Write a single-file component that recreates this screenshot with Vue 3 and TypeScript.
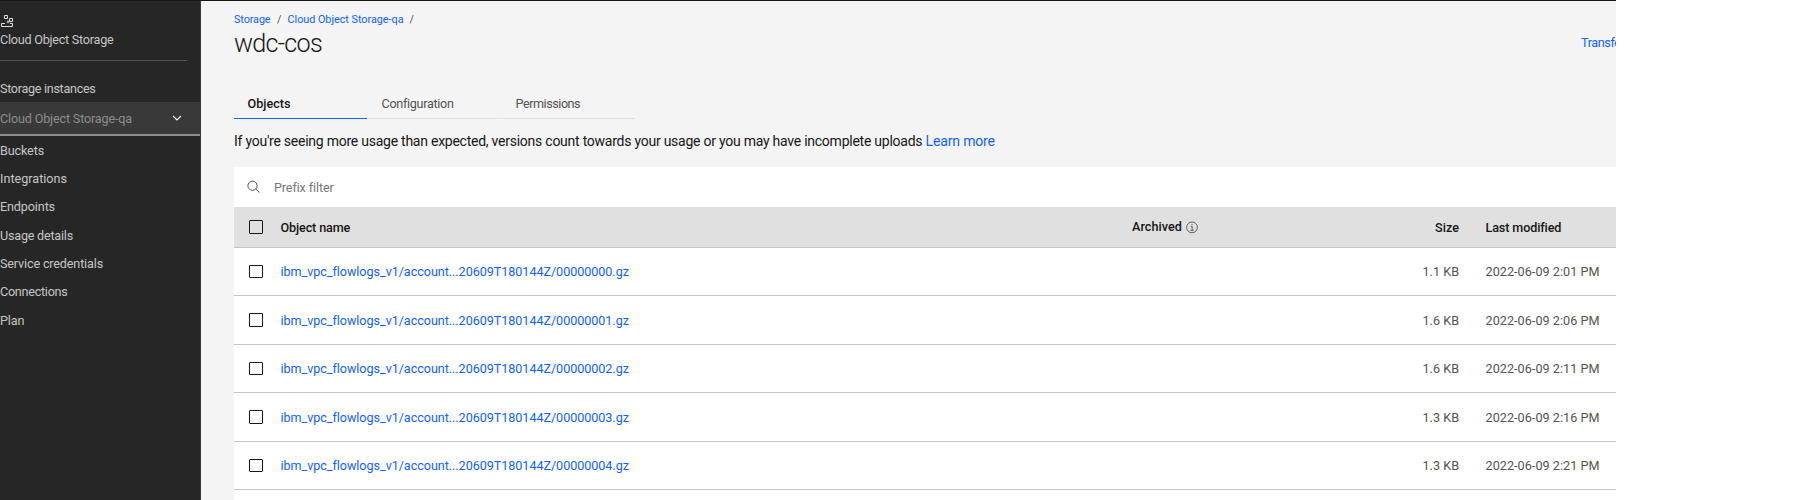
<script setup lang="ts">
interface Label {
  text: string
  tracking: number
}

interface StorageObject {
  name: string
  size: string
  modified: string
  tall: boolean
}

const navItems: Label[] = [
  { text: 'Buckets', tracking: -0.134 },
  { text: 'Integrations', tracking: 0.005 },
  { text: 'Endpoints', tracking: -0.123 },
  { text: 'Usage details', tracking: -0.213 },
  { text: 'Service credentials', tracking: -0.15 },
  { text: 'Connections', tracking: -0.262 },
  { text: 'Plan', tracking: -0.078 },
]

const tabs: (Label & { active: boolean })[] = [
  { text: 'Objects', tracking: 0, active: true },
  { text: 'Configuration', tracking: -0.3, active: false },
  { text: 'Permissions', tracking: -0.45, active: false },
]

const prefix = 'ibm_vpc_flowlogs_v1/account...20609T180144Z/'

const objects: StorageObject[] = [
  { name: prefix + '00000000.gz', size: '1.1 KB', modified: '2022-06-09 2:01 PM', tall: false },
  { name: prefix + '00000001.gz', size: '1.6 KB', modified: '2022-06-09 2:06 PM', tall: true },
  { name: prefix + '00000002.gz', size: '1.6 KB', modified: '2022-06-09 2:11 PM', tall: false },
  { name: prefix + '00000003.gz', size: '1.3 KB', modified: '2022-06-09 2:16 PM', tall: true },
  { name: prefix + '00000004.gz', size: '1.3 KB', modified: '2022-06-09 2:21 PM', tall: false },
]
</script>

<template>
  <div class="app">
    <div class="topline"></div>
    <div class="shell">
      <aside class="side">
        <svg class="service-icon" width="14" height="14" viewBox="0 0 14 14" fill="none" stroke="#e0e0e0">
          <path d="M4.5 1.5h3v3h-3z" />
          <path d="M9.5 4.5h3v3h-3z" />
          <path d="M7.3 7.1h1.6v1.6H7.3z" stroke-width=".8" />
          <path d="M5 9.5H1.5v3h11v-3H10" />
        </svg>
        <div class="service-name">Cloud Object Storage</div>
        <div class="divider"></div>
        <div class="instances">Storage instances</div>
        <div class="picker">
          <span class="picker-name">Cloud Object Storage-qa</span>
          <svg width="10" height="7" viewBox="0 0 10 7" fill="none" stroke="#f4f4f4" stroke-width="1.2">
            <path d="M1 1l4 4 4-4" />
          </svg>
        </div>
        <nav class="nav">
          <a
            v-for="item in navItems"
            :key="item.text"
            class="nav-item"
            :style="{ letterSpacing: item.tracking + 'px' }"
          >{{ item.text }}</a>
        </nav>
      </aside>

      <main class="main">
        <div class="crumbs">
          <a class="crumb-root">Storage</a>
          <span class="slash">/</span>
          <a class="crumb-instance">Cloud Object Storage-qa</a>
          <span class="slash">/</span>
        </div>
        <header class="heading">
          <h1>wdc-cos</h1>
          <a class="transfers">Transfers</a>
        </header>
        <div class="tabs">
          <div v-for="tab in tabs" :key="tab.text" class="tab" :class="{ active: tab.active }">
            <span :style="{ letterSpacing: tab.tracking + 'px' }">{{ tab.text }}</span>
          </div>
        </div>
        <p class="notice">
          <span class="notice-text">If you're seeing more usage than expected, versions count towards your usage or you may have incomplete uploads</span>
          <a class="learn">Learn more</a>
        </p>

        <section class="table">
          <div class="search">
            <svg width="14" height="14" viewBox="0 0 14 14" fill="none" stroke="#525252">
              <circle cx="5.5" cy="5.7" r="4.6" />
              <path d="M8.8 9l3.7 3.7" />
            </svg>
            <span class="placeholder">Prefix filter</span>
          </div>
          <div class="row head">
            <span class="checkbox"></span>
            <span class="col-name">Object name</span>
            <span class="col-archived">
              <span>Archived</span>
              <svg width="13" height="13" viewBox="0 0 13 13" fill="none" stroke="#525252">
                <circle cx="6" cy="6.4" r="5.4" stroke-width=".9" />
                <path d="M4.8 5.7h1.4v3.4M4.4 9.3h3.4" stroke-width=".9" />
                <circle cx="6" cy="3.7" r=".6" fill="#525252" stroke="none" />
              </svg>
            </span>
            <span class="col-size">Size</span>
            <span class="col-date">Last modified</span>
          </div>
          <div v-for="item in objects" :key="item.name" class="row" :class="{ tall: item.tall }">
            <span class="checkbox"></span>
            <a class="col-name">{{ item.name }}</a>
            <span></span>
            <span class="col-size">{{ item.size }}</span>
            <span class="col-date">{{ item.modified }}</span>
          </div>
        </section>
      </main>
    </div>
  </div>
</template>

<style>
body {
  margin: 0;
  background: #fff;
}
</style>

<style scoped>
.app {
  box-sizing: border-box;
  width: 1616px;
  height: 500px;
  overflow: hidden;
  font-family: Roboto, 'Liberation Sans', sans-serif;
  font-size: 12.6px;
  color: #161616;
  white-space: nowrap;
}
.topline {
  height: 1px;
  background: #161616;
}
.shell {
  display: flex;
  height: 499px;
}
.side {
  box-sizing: border-box;
  flex: none;
  width: 201px;
  padding-top: 13px;
  border-right: 1px solid #393939;
  background: #262626;
  color: #c6c6c6;
}
.service-icon {
  display: block;
}
.service-name {
  height: 20px;
  padding-top: 2px;
  line-height: 20px;
  letter-spacing: -0.233px;
}
.divider {
  width: 187px;
  height: 1px;
  margin-top: 10px;
  background: #525252;
}
.instances {
  height: 41px;
  line-height: 56px;
  letter-spacing: -0.301px;
}
.picker {
  box-sizing: border-box;
  display: flex;
  align-items: center;
  justify-content: space-between;
  height: 34px;
  padding-right: 18px;
  border-bottom: 2px solid #8d8d8d;
  background: #393939;
  color: #8d8d8d;
}
.picker-name {
  letter-spacing: -0.158px;
}
.nav {
  display: flex;
  flex-direction: column;
  padding-top: 0.5px;
}
.nav-item {
  height: 28.35px;
  line-height: 28.35px;
}
.main {
  flex: 1;
  min-width: 0;
  padding-left: 33px;
  background: #f4f4f4;
}
.crumbs {
  display: flex;
  height: 21px;
  padding-top: 8px;
  font-size: 10.8px;
  line-height: 21px;
  color: #0f62fe;
}
.crumb-root {
  width: 36px;
  letter-spacing: -0.086px;
}
.crumb-instance {
  width: 115px;
  letter-spacing: -0.013px;
}
.slash {
  width: 10.5px;
  padding-left: 7px;
  color: #525252;
}
.heading {
  display: flex;
  justify-content: space-between;
  height: 57px;
}
h1 {
  margin: 0;
  font-size: 25.2px;
  font-weight: 300;
  line-height: 27px;
  letter-spacing: -0.725px;
}
.transfers {
  width: 35px;
  overflow: hidden;
  line-height: 26px;
  letter-spacing: -0.4px;
  color: #0f62fe;
}
.tabs {
  display: flex;
  gap: 1px;
}
.tab {
  box-sizing: border-box;
  width: 133px;
  height: 32px;
  padding-left: 13.5px;
  border-bottom: 1px solid #e0e0e0;
  line-height: 34px;
  color: #525252;
}
.tab.active {
  border-bottom-color: #0f62fe;
  color: #161616;
  font-weight: 500;
}
.notice {
  display: flex;
  height: 48px;
  margin: 0;
  font-size: 14px;
  line-height: 45px;
}
.notice-text {
  width: 691.5px;
  letter-spacing: -0.246px;
}
.learn {
  letter-spacing: -0.15px;
  color: #0f62fe;
}
.table {
  height: 333px;
  background: #fff;
}
.search {
  display: flex;
  align-items: center;
  gap: 13px;
  height: 40px;
  padding-left: 13px;
}
.placeholder {
  letter-spacing: -0.12px;
  color: #767676;
}
.row {
  box-sizing: border-box;
  display: grid;
  grid-template-columns: 46.5px 851.5px 250px 77px 1fr;
  height: 48px;
  border-bottom: 1px solid #c6c6c6;
  line-height: 48px;
}
.row.tall {
  height: 49px;
  line-height: 50px;
}
.checkbox {
  box-sizing: border-box;
  width: 14px;
  height: 13px;
  margin: 17px 0 0 15px;
  border: 1px solid #161616;
  border-radius: 1px;
}
.tall .checkbox {
  height: 14px;
}
.col-name {
  letter-spacing: -0.045px;
}
a.col-name {
  color: #0f62fe;
}
.col-size {
  text-align: right;
  letter-spacing: 0.025px;
  color: #525252;
}
.col-date {
  padding-left: 26.5px;
  letter-spacing: 0.06px;
  color: #525252;
}
.row.head {
  height: 41px;
  background: #e0e0e0;
  font-weight: 500;
  line-height: 42px;
}
.head .checkbox {
  height: 14px;
  margin-top: 13px;
}
.head .col-name {
  letter-spacing: -0.13px;
}
.head .col-size,
.head .col-date {
  color: #161616;
}
.head .col-date {
  letter-spacing: -0.12px;
}
.col-archived {
  display: flex;
  gap: 4px;
  line-height: 40px;
  letter-spacing: 0.05px;
}
.col-archived svg {
  margin-top: 14px;
}
</style>
